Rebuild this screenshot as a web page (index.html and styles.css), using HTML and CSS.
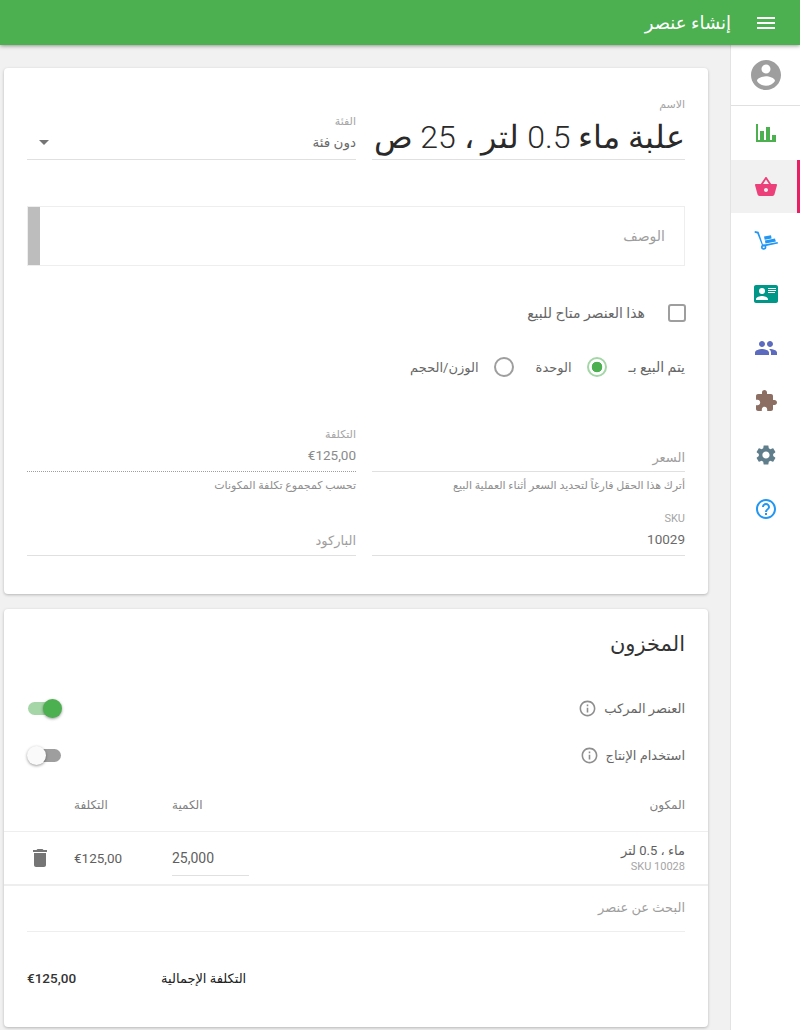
FILE: index.html
```html
<!DOCTYPE html>
<html lang="ar" dir="rtl">
<head>
<meta charset="utf-8">
<title>إنشاء عنصر</title>
<link rel="stylesheet" href="styles.css">
</head>
<body>
<header class="topbar">
  <svg class="menu-icon" viewBox="0 0 24 24"><path d="M3 18h18v-2H3v2zm0-5h18v-2H3v2zm0-7v2h18V6H3z"/></svg>
  <h1 class="topbar-title">إنشاء عنصر</h1>
</header>
<div class="shell">
  <nav class="sidebar">
    <div class="nav-user">
      <svg class="avatar" viewBox="0 0 24 24"><path d="M12 2C6.48 2 2 6.48 2 12s4.48 10 10 10 10-4.48 10-10S17.52 2 12 2zm0 3c1.66 0 3 1.34 3 3s-1.34 3-3 3-3-1.34-3-3 1.34-3 3-3zm0 14.2c-2.5 0-4.71-1.28-6-3.22.03-1.99 4-3.08 6-3.08 1.99 0 5.97 1.09 6 3.08-1.29 1.94-3.5 3.22-6 3.22z"/></svg>
    </div>
    <a class="nav-item c-green"><svg viewBox="0 0 24 24"><path d="M22,21H2V3H4V19H6V10H10V19H12V6H16V19H18V14H22V21Z"/></svg></a>
    <a class="nav-item nav-active c-pink"><svg viewBox="0 0 24 24"><path d="M17.21 9l-4.38-6.56c-.19-.28-.51-.42-.83-.42-.32 0-.64.14-.83.43L6.79 9H2c-.55 0-1 .45-1 1 0 .09.01.18.04.27l2.54 9.27c.23.84 1 1.46 1.92 1.46h13c.92 0 1.69-.62 1.93-1.46l2.54-9.27L23 10c0-.55-.45-1-1-1h-4.79zM9 9l3-4.4L15 9H9zm3 8c-1.1 0-2-.9-2-2s.9-2 2-2 2 .9 2 2-.9 2-2 2z"/></svg></a>
    <a class="nav-item c-blue"><svg viewBox="0 0 24 24"><path d="M.8 3l3.8.8L9 16.8l14.6-2.9.4 1.7-15.4 3.1L3.3 5.4.6 4.8z"/><path d="M10 8.6l7-1.4.6 3.2-6.9 1.3z"/><path d="M10.9 12.4l10-1.9 1 3-10.4 2.1z"/><path d="M9.7 16.4a2.7 2.7 0 1 0 0 5.4 2.7 2.7 0 0 0 0-5.4zm0 1.6a1.1 1.1 0 1 1 0 2.2 1.1 1.1 0 0 1 0-2.2z"/></svg></a>
    <a class="nav-item c-teal"><svg viewBox="0 0 24 24"><path d="M2,3H22C23.05,3 24,3.95 24,5V19C24,20.05 23.05,21 22,21H2C0.95,21 0,20.05 0,19V5C0,3.95 0.95,3 2,3M14,6V7H22V6H14M14,8V9H21.5L22,9V8H14M14,10V11H21V10H14M8,13.91C6,13.91 2,15 2,17V18H14V17C14,15 10,13.91 8,13.91M8,6A3,3 0 0,0 5,9A3,3 0 0,0 8,12A3,3 0 0,0 11,9A3,3 0 0,0 8,6Z"/></svg></a>
    <a class="nav-item c-indigo"><svg viewBox="0 0 24 24"><path d="M16 11c1.66 0 2.99-1.34 2.99-3S17.66 5 16 5c-1.66 0-3 1.34-3 3s1.34 3 3 3zm-8 0c1.66 0 2.99-1.34 2.99-3S9.66 5 8 5C6.34 5 5 6.34 5 8s1.34 3 3 3zm0 2c-2.33 0-7 1.17-7 3.5V19h14v-2.5c0-2.33-4.67-3.5-7-3.5zm8 0c-.29 0-.62.02-.97.05 1.16.84 1.97 1.97 1.97 3.45V19h6v-2.5c0-2.33-4.67-3.5-7-3.5z"/></svg></a>
    <a class="nav-item c-brown"><svg viewBox="0 0 24 24"><path d="M20.5 11H19V7c0-1.1-.9-2-2-2h-4V3.5C13 2.12 11.88 1 10.5 1S8 2.12 8 3.5V5H4c-1.1 0-1.99.9-1.99 2v3.8H3.5c1.49 0 2.7 1.21 2.7 2.7s-1.21 2.7-2.7 2.7H2V20c0 1.1.9 2 2 2h3.8v-1.5c0-1.49 1.21-2.7 2.7-2.7 1.49 0 2.7 1.21 2.7 2.7V22H17c1.1 0 2-.9 2-2v-4h1.5c1.38 0 2.5-1.12 2.5-2.5S21.88 11 20.5 11z"/></svg></a>
    <a class="nav-item c-slate"><svg viewBox="0 0 24 24"><path d="M19.14 12.94c.04-.3.06-.61.06-.94 0-.32-.02-.64-.07-.94l2.03-1.58c.18-.14.23-.41.12-.61l-1.92-3.32c-.12-.22-.37-.29-.59-.22l-2.39.96c-.5-.38-1.03-.7-1.62-.94l-.36-2.54c-.04-.24-.24-.41-.48-.41h-3.84c-.24 0-.43.17-.47.41l-.36 2.54c-.59.24-1.13.57-1.62.94l-2.39-.96c-.22-.08-.47 0-.59.22L2.74 8.87c-.12.21-.08.47.12.61l2.03 1.58c-.05.3-.09.63-.09.94s.02.64.07.94l-2.03 1.58c-.18.14-.23.41-.12.61l1.92 3.32c.12.22.37.29.59.22l2.39-.96c.5.38 1.03.7 1.62.94l.36 2.54c.05.24.24.41.48.41h3.84c.24 0 .44-.17.47-.41l.36-2.54c.59-.24 1.13-.56 1.62-.94l2.39.96c.22.08.47 0 .59-.22l1.92-3.32c.12-.22.07-.47-.12-.61l-2.01-1.58zM12 15.6c-1.98 0-3.6-1.62-3.6-3.6s1.62-3.6 3.6-3.6 3.6 1.62 3.6 3.6-1.62 3.6-3.6 3.6z"/></svg></a>
    <a class="nav-item c-sky"><svg viewBox="0 0 24 24"><path d="M11 18h2v-2h-2v2zm1-16C6.48 2 2 6.48 2 12s4.48 10 10 10 10-4.48 10-10S17.52 2 12 2zm0 18c-4.41 0-8-3.59-8-8s3.59-8 8-8 8 3.59 8 8-3.59 8-8 8zm0-14c-2.21 0-4 1.79-4 4h2c0-1.1.9-2 2-2s2 .9 2 2c0 2-3 1.75-3 5h2c0-2.25 3-2.5 3-5 0-2.21-1.79-4-4-4z"/></svg></a>
  </nav>
  <main class="content">
    <section class="card card-item">
      <div class="row row-name">
        <div class="field col-main">
          <span class="label">الاسم</span>
          <div class="value-big">علبة ماء 0.5 لتر ، 25 ص</div>
        </div>
        <div class="field field-bottom col-side">
          <span class="label">الفئة</span>
          <div class="select">
            <span class="value">دون فئة</span>
            <span class="caret"></span>
          </div>
        </div>
      </div>
      <div class="editor">
        <span class="placeholder">الوصف</span>
        <span class="editor-bar"></span>
      </div>
      <label class="check-row">
        <span class="checkbox"></span>
        <span class="text text-lg">هذا العنصر متاح للبيع</span>
      </label>
      <div class="radio-row">
        <span class="text text-lg">يتم البيع بـ</span>
        <span class="radio radio-on"></span>
        <span class="text">الوحدة</span>
        <span class="radio"></span>
        <span class="text">الوزن/الحجم</span>
      </div>
      <div class="row row-price">
        <div class="col-main">
          <div class="field-line field-empty"><span class="placeholder placeholder-sm">السعر</span></div>
          <p class="hint">أترك هذا الحقل فارغاً لتحديد السعر أثناء العملية البيع</p>
        </div>
        <div class="col-side">
          <div class="field-line field-dotted">
            <span class="label">التكلفة</span>
            <span class="value value-muted">€125,00</span>
          </div>
          <p class="hint">تحسب كمجموع تكلفة المكونات</p>
        </div>
      </div>
      <div class="row row-sku">
        <div class="col-main field-line">
          <span class="label">SKU</span>
          <span class="value value-sku">10029</span>
        </div>
        <div class="col-side field-line field-empty"><span class="placeholder placeholder-sm">الباركود</span></div>
      </div>
    </section>
    <section class="card card-stock">
      <h2 class="card-title">المخزون</h2>
      <div class="switch-row switch-first">
        <span class="text">العنصر المركب</span>
        <svg class="info" viewBox="0 0 24 24"><path d="M11 7h2v2h-2zm0 4h2v6h-2zm1-9C6.48 2 2 6.48 2 12s4.48 10 10 10 10-4.48 10-10S17.52 2 12 2zm0 18c-4.41 0-8-3.59-8-8s3.59-8 8-8 8 3.59 8 8-3.59 8-8 8z"/></svg>
        <span class="switch switch-on"><span class="knob"></span></span>
      </div>
      <div class="switch-row">
        <span class="text">استخدام الإنتاج</span>
        <svg class="info" viewBox="0 0 24 24"><path d="M11 7h2v2h-2zm0 4h2v6h-2zm1-9C6.48 2 2 6.48 2 12s4.48 10 10 10 10-4.48 10-10S17.52 2 12 2zm0 18c-4.41 0-8-3.59-8-8s3.59-8 8-8 8 3.59 8 8-3.59 8-8 8z"/></svg>
        <span class="switch"><span class="knob"></span></span>
      </div>
      <div class="table-head">
        <span class="th col-name">المكون</span>
        <span class="th col-qty">الكمية</span>
        <span class="th col-cost">التكلفة</span>
      </div>
      <div class="table-row">
        <div class="col-name td-name">
          <span class="item-name">ماء ، 0.5 لتر</span>
          <span class="item-sku">SKU 10028</span>
        </div>
        <div class="col-qty"><span class="qty-input">25,000</span></div>
        <div class="col-cost td-cost">€125,00</div>
        <svg class="trash" viewBox="0 0 24 24"><path d="M6 19c0 1.1.9 2 2 2h8c1.1 0 2-.9 2-2V7H6v12zM19 4h-3.5l-1-1h-5l-1 1H5v2h14V4z"/></svg>
      </div>
      <div class="search"><span class="placeholder placeholder-sm">البحث عن عنصر</span></div>
      <div class="total">
        <span class="total-label">التكلفة الإجمالية</span>
        <span class="total-value">€125,00</span>
      </div>
    </section>
  </main>
</div>
</body>
</html>
```
FILE: styles.css
```css
* { box-sizing: border-box; }
html, body { margin: 0; padding: 0; }
body {
  width: 800px;
  height: 1030px;
  overflow: hidden;
  background: #f1f1f1;
  font-family: Roboto, "DejaVu Sans", sans-serif;
  color: #555;
  font-size: 13px;
}
.topbar {
  height: 45px;
  background: #4caf50;
  display: flex;
  align-items: center;
  padding-right: 22px;
  box-shadow: 0 1px 4px rgba(0,0,0,.4);
  position: relative;
  color: #fff;
}
.menu-icon { width: 24px; height: 24px; fill: #fff; margin-left: 23px; }
.topbar-title { margin: 0; font-size: 18px; font-weight: 400; }
.shell { display: flex; height: 985px; }
.sidebar {
  width: 70px;
  flex: none;
  background: #fff;
  border-left: 1px solid #e3e3e3;
  display: flex;
  flex-direction: column;
}
.nav-user {
  height: 61px;
  border-bottom: 1px solid #e0e0e0;
  display: flex;
  align-items: center;
  justify-content: center;
}
.avatar { width: 36px; height: 36px; fill: #9e9e9e; }
.nav-item {
  height: 53.7px;
  display: flex;
  align-items: center;
  justify-content: center;
}
.nav-item svg { width: 24px; height: 24px; }
.nav-active { background: #f1f1f1; box-shadow: inset -3px 0 0 #e91e63; }
.c-green svg { fill: #4caf50; }
.c-pink svg { fill: #ec407a; }
.c-blue svg { fill: #2196f3; }
.c-teal svg { fill: #009688; }
.c-indigo svg { fill: #5c6bc0; }
.c-brown svg { fill: #8d6e63; }
.c-slate svg { fill: #607d8b; }
.c-sky svg { fill: #2196f3; }
.content { flex: 1; padding: 23px 22px 0 22px; }
.card {
  width: 704px;
  background: #fff;
  border-radius: 4px;
  box-shadow: 0 1px 3px rgba(0,0,0,.25);
  padding: 0 23px;
}
.card-item { height: 526px; padding-top: 30px; }
.card-stock { height: 418px; margin-top: 15px; padding-top: 20px; }
.row { display: flex; gap: 16px; }
.col-main { width: 313px; flex: none; }
.col-side { flex: 1; min-width: 0; }
.field { display: flex; flex-direction: column; }
.field-bottom { justify-content: flex-end; padding-top: 17px; }
.label { display: block; font-size: 11px; line-height: 14px; color: #a5a5a5; }
.row-name { height: 62px; }
.row-name .field { border-bottom: 1px solid #e0e0e0; height: 62px; }
.value-big {
  font-size: 32px;
  font-weight: 300;
  line-height: 42px;
  color: #2a2a2a;
  white-space: nowrap;
  margin-top: 4px;
}
.select { display: flex; justify-content: space-between; align-items: center; height: 30px; padding-left: 12px; padding-bottom: 4px; }
.value { font-size: 13.5px; line-height: 20px; color: #6a6a6a; display: block; }
.caret { width: 0; height: 0; border: 5px solid transparent; border-top: 5px solid #757575; border-bottom: 0; }
.editor {
  margin-top: 46px;
  height: 60px;
  border: 1px solid #eee;
  display: flex;
  justify-content: space-between;
  align-items: center;
  padding-right: 19px;
  position: relative;
}
.editor-bar { width: 12px; height: 58px; background: #bdbdbd; position: absolute; left: 0; top: 0; }
.placeholder { font-size: 14px; color: #9e9e9e; }
.placeholder-sm { font-size: 13px; }
.text { font-size: 13px; color: #666; }
.text-lg { font-size: 14px; }
.check-row { display: flex; align-items: center; gap: 23px; margin: 37px -1px 0 0; height: 20px; }
.checkbox { width: 18px; height: 18px; border: 2px solid #9e9e9e; border-radius: 3px; }
.radio-row { display: flex; align-items: center; margin-top: 34px; height: 20px; }
.radio { width: 20px; height: 20px; border: 2px solid #9e9e9e; border-radius: 50%; margin: 0 22px 0 15px; background: #fff; }
.radio-on { border-color: #a5d6a7; background: radial-gradient(circle, #4caf50 0 5px, #fff 5.6px); }
.row-price { margin-top: 49px; }
.field-line { height: 46px; border-bottom: 1px solid #e0e0e0; }
.field-empty { display: flex; align-items: flex-end; padding-bottom: 6px; }
.field-dotted { border-bottom: 1px dotted #9e9e9e; padding-top: 2px; }
.hint { margin: 7px 0 0; font-size: 11px; line-height: 14px; color: #8f8f8f; }
.value-muted { color: #8a8a8a; margin-top: 3px; }
.row-sku { margin-top: 18px; }
.row-sku .field-line { height: 45px; padding-top: 1px; }
.row-sku .field-empty { padding-bottom: 7px; }
.value-sku { margin-top: 3px; }
.card-title { margin: 0; font-size: 21px; font-weight: 400; line-height: 30px; color: #333; }
.switch-row { display: flex; align-items: center; height: 24px; margin-top: 23px; }
.switch-first { margin-top: 37px; }
.info { width: 19px; height: 19px; fill: #8e8e8e; margin-right: 7px; }
.switch { margin: 0 auto 0 1px; width: 33px; height: 13px; border-radius: 7px; background: #9e9e9e; position: relative; display: block; }
.knob { position: absolute; right: 15px; top: -3px; width: 19px; height: 19px; border-radius: 50%; background: #fafafa; box-shadow: 0 1px 3px rgba(0,0,0,.4); }
.switch-on { background: #a5d6a7; }
.switch-on .knob { right: -1px; background: #4caf50; }
.table-head { display: flex; margin: 14px -23px 0; padding: 16px 23px 0; height: 51px; border-bottom: 1px solid #eee; }
.th { color: #808080; font-size: 12px; line-height: 16px; }
.col-name { width: 436px; flex: none; }
.col-qty { width: 77px; flex: none; text-align: left; }
.col-cost { width: 98px; flex: none; text-align: left; }
.table-row { display: flex; margin: 0 -23px; padding: 0 23px; height: 54px; border-bottom: 2px solid #eee; align-items: center; }
.td-name { display: flex; flex-direction: column; }
.item-name { font-size: 13px; line-height: 17px; color: #5f5f5f; }
.item-sku { font-size: 11px; line-height: 14px; margin-top: 1px; color: #a5a5a5; }
.qty-input { display: block; width: 77px; font-size: 14px; color: #5f5f5f; height: 36px; line-height: 36px; border-bottom: 1px solid #e0e0e0; text-align: left; direction: ltr; }
.td-cost { font-size: 13.5px; color: #5f5f5f; direction: ltr; }
.trash { width: 24px; height: 24px; fill: #757575; margin-right: 22px; }
.search { height: 46px; padding-bottom: 2px; border-bottom: 1px solid #eee; display: flex; align-items: center; }
.total { display: flex; align-items: center; margin-top: 29px; height: 34px; }
.total-label { font-size: 13px; font-weight: 400; color: #212121; margin-right: auto; }
.total-value { font-size: 13.5px; font-weight: 500; color: #333; margin-right: 85px; direction: ltr; }
```
